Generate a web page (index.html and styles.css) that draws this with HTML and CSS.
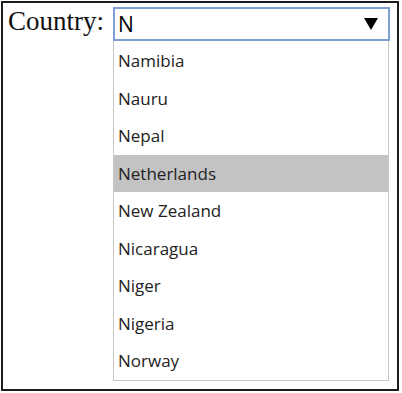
FILE: index.html
```html
<!DOCTYPE html>
<html lang="en">
<head>
  <meta charset="UTF-8" />
  <title>Country picker</title>
  <link rel="stylesheet" href="styles.css">
</head>
<body>
  <div class="frame">
    <label class="label" for="country">Country:</label>
    <div class="combo">
      <div class="field">
        <span id="country" class="value">N</span>
        <svg class="arrow" width="14" height="12" viewBox="0 0 14 12">
          <polygon points="0,0 14,0 7,12" fill="#000" />
        </svg>
      </div>
      <ul class="list">
        <li>Namibia</li>
        <li>Nauru</li>
        <li>Nepal</li>
        <li class="active">Netherlands</li>
        <li>New Zealand</li>
        <li>Nicaragua</li>
        <li>Niger</li>
        <li>Nigeria</li>
        <li>Norway</li>
      </ul>
    </div>
  </div>
</body>
</html>
```

FILE: styles.css
```css
body {
  margin: 0;
  background: #fff;
}
.frame {
  margin: 1px;
  width: 394px;
  height: 386px;
  border: 2px solid #1c1c1c;
  display: flex;
  align-items: flex-start;
}
.label {
  font-family: "Liberation Serif", serif;
  font-size: 27px;
  line-height: 30px;
  color: #111;
  margin-top: 3px;
  padding-left: 5px;
  width: 105px;
}
.combo {
  margin-top: 4px;
  width: 277px;
  font-family: "Open Sans", sans-serif;
  color: #222;
}
.field {
  box-sizing: border-box;
  height: 34px;
  border: 2px solid #7e9fd4;
  display: flex;
  align-items: center;
  justify-content: space-between;
  padding: 0 10px 0 3px;
}
.value {
  font-size: 21px;
  line-height: 28px;
  color: #000;
}
.arrow {
  display: block;
}
.list {
  list-style: none;
  margin: 0;
  padding: 0;
  width: 274px;
  border: 1px solid #c6c6c6;
  border-top: 0;
  padding-top: 1px;
}
.list li {
  height: 37.5px;
  line-height: 37.5px;
  padding-left: 4px;
  font-size: 17px;
}
.list li.active {
  background: #c3c3c3;
}
```
